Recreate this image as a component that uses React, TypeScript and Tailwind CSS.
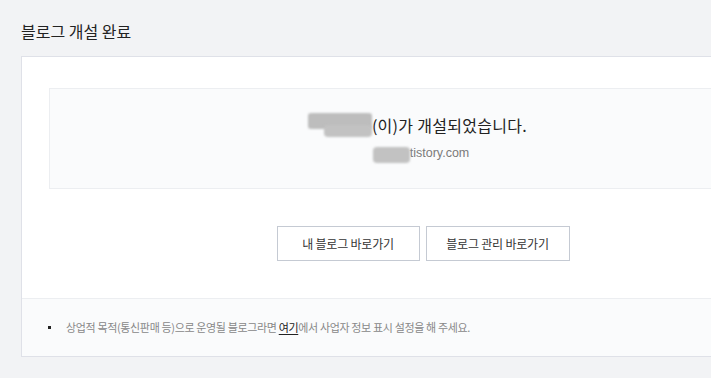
import React from 'react';

const font = { fontFamily: '"Noto Sans CJK KR", "Noto Sans", sans-serif' };

export default function App() {
  return (
    <div className="w-screen h-screen overflow-hidden bg-[#f2f3f5] pl-[21px] pt-[18px]" style={font}>
      {/* Title */}
      <h1 className="text-[16px] leading-[26px] text-[#222] font-normal h-[38px]">블로그 개설 완료</h1>

      {/* Card */}
      <div className="w-[804px] bg-white border border-[#dfe1e8]">
        <div className="px-[27px] pt-[31px]">
          <div className="h-[101px] bg-[#fafbfc] border border-[#eceef1] flex flex-col items-center justify-center">
            <div className="flex items-center text-[16px] leading-[22px] text-[#222] tracking-[0.3px] ml-[-11px]">
              <span className="relative inline-block w-[64px] h-[20px]">
                <span className="absolute left-0 top-[-2px] w-[64px] h-[16px] bg-[#bdbdbd] rounded-[3px] blur-[1px]" />
                <span className="absolute left-[16px] top-[10px] w-[48px] h-[12px] bg-[#c2c2c2] rounded-[4px] blur-[1px]" />
              </span>
              <span>(이)가 개설되었습니다.</span>
            </div>
            <div
              className="flex items-center mt-[7px] text-[12.5px] leading-[18px] text-[#7a7a7a] ml-[-4px]"
              style={{ fontFamily: '"Liberation Sans", Arial, sans-serif' }}
            >
              <span className="inline-block w-[37px] h-[16px] bg-[#c2c2c2] rounded-[4px] blur-[1px] mt-[4px]" />
              <span>tistory.com</span>
            </div>
          </div>
        </div>

        {/* Buttons */}
        <div className="flex justify-center gap-[6px] pt-[37px] pb-[37px]">
          <button className="w-[143px] h-[35px] border border-[#c5cad3] bg-white text-[12px] text-[#333] tracking-[-0.2px]">
            내 블로그 바로가기
          </button>
          <button className="w-[144px] h-[35px] border border-[#c5cad3] bg-white text-[12px] text-[#333] tracking-[-0.2px]">
            블로그 관리 바로가기
          </button>
        </div>

        {/* Footer */}
        <div className="h-[58px] bg-[#fafbfc] border-t border-[#eceef1] flex items-center pl-[26px]">
          <ul className="list-none">
            <li className="flex items-center text-[11px] text-[#888] tracking-[-0.35px]">
              <span className="w-[3px] h-[3px] bg-[#222] mr-[15px]" />
              <span>
                상업적 목적(통신판매 등)으로 운영될 블로그라면{' '}
                <a className="text-[#222] underline underline-offset-2">여기</a>에서 사업자 정보 표시 설정을 해 주세요.
              </span>
            </li>
          </ul>
        </div>
      </div>
    </div>
  );
}
